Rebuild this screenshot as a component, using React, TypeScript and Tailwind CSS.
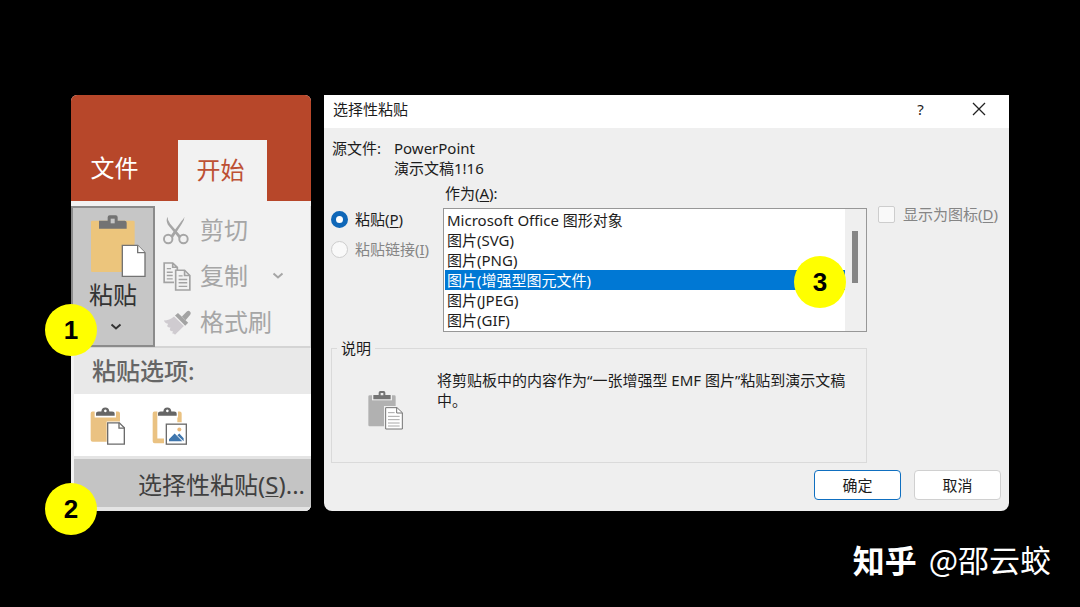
import type { ReactNode } from "react";

const formats = [
  "Microsoft Office 图形对象",
  "图片(SVG)",
  "图片(PNG)",
  "图片(增强型图元文件)",
  "图片(JPEG)",
  "图片(GIF)",
];

function Badge({ children, className }: { children: ReactNode; className: string }) {
  return (
    <span
      className={`absolute flex size-[52px] items-center justify-center rounded-full bg-[#ffff00] font-['Liberation_Sans',sans-serif] text-[26px] leading-none font-bold text-black ${className}`}
    >
      {children}
    </span>
  );
}

function PasteLargeIcon() {
  return (
    <svg viewBox="0 0 168 186" className="ml-2.5 h-[62px] w-14" aria-hidden="true">
      <rect x="3" y="17" width="131" height="154" rx="4" fill="#ecc57c" />
      <path d="M27 17h26V7q0-6 6-6h18q6 0 6 6v10h21q6 0 6 6v18H27z" fill="#737373" />
      <rect x="62" y="11" width="12" height="14" fill="#c6c6c6" />
      <path d="M91 171h77v15H91z" fill="#c6c6c6" />
      <path d="M134 85h34v86h-34z" fill="#c6c6c6" />
      <path d="M97 91h46l22 22v71H97z" fill="#fff" stroke="#737373" strokeWidth="4" />
      <path d="M143 91v22h22" fill="#fff" stroke="#737373" strokeWidth="4" />
    </svg>
  );
}

function ScissorsIcon() {
  return (
    <svg viewBox="0 0 80 88" className="h-[29px] w-[26px]" fill="none" stroke="#a6a6a6" aria-hidden="true">
      <path d="M14 2q0 12 8 21l35 40-8 5L15 26Q8 14 14 2z" fill="#a6a6a6" stroke="none" />
      <path d="M66 2q0 12-8 21L30 67l-8-5 35-47q7-7 9-13z" fill="#a6a6a6" stroke="none" />
      <circle cx="16" cy="70" r="13" strokeWidth="6" />
      <circle cx="63" cy="70" r="13" strokeWidth="6" />
    </svg>
  );
}

function CopyIcon() {
  return (
    <svg viewBox="0 0 84 88" className="h-[29px] w-7" fill="none" stroke="#a3a3a3" strokeWidth="5" aria-hidden="true">
      <path d="M33 62H3V3h26l14 13v8M29 3v13h14" />
      <path d="M11 20h13M11 31h18M11 41h18M11 51h18" strokeWidth="4" />
      <path d="M38 25h27l16 16v44H38z" fill="#f2f2f2" />
      <path d="M65 25v16h16" />
      <path d="M47 42h12M47 53h26M47 63h26M47 74h26" strokeWidth="4" />
    </svg>
  );
}

function BrushIcon() {
  return (
    <svg viewBox="0 0 84 76" className="h-[25px] w-7" aria-hidden="true">
      <path d="M2 32q17 0 31-12l30 29-27 26q-5-5-8-3l1-8q-7 2-9-4l2-7q-8 2-10-4l3-7q-8 0-13-10z" fill="#cfcbd0" />
      <path d="M36 17l9-8 31 30-9 9z" fill="#a3a3a3" />
      <path d="M57 20L71 5q8-6 12 2 2 5-2 9L68 31z" fill="#a3a3a3" />
    </svg>
  );
}

function Chevron({ className }: { className: string }) {
  return (
    <svg viewBox="0 0 12 8" className={`h-2 w-3 ${className}`} fill="none" stroke="currentColor" strokeWidth="2" aria-hidden="true">
      <path d="M1.500 1.500L6 5.500l4.500-4" />
    </svg>
  );
}

function ClipHead() {
  return (
    <path
      d="M18 29v-6q0-7 8-7h8q1-12 12-12t12 12h8q8 0 8 7v6z M46 10a4 4 0 1 0 .1 0z"
      fill="#666"
      fillRule="evenodd"
    />
  );
}

function KeepSourceIcon() {
  return (
    <svg viewBox="0 0 108 116" className="h-[39px] w-9" aria-hidden="true">
      <path d="M7 16h7v18h64V16h6q6 0 6 6v24H50v61H8q-6 0-6-6V22q0-6 5-6z" fill="#eac282" />
      <ClipHead />
      <path d="M53 50h35l15 15v49H53z" fill="#fff" stroke="#6b6b6b" strokeWidth="4" />
      <path d="M87 50v16h16" fill="none" stroke="#6b6b6b" strokeWidth="4" />
    </svg>
  );
}

function PastePictureIcon() {
  return (
    <svg viewBox="0 0 108 116" className="h-[39px] w-9" aria-hidden="true">
      <path d="M7 16h9v81h20v14H8q-6 0-6-6V22q0-6 5-6zM78 16h5q6 0 6 6v26H76V34h2z" fill="#eac282" />
      <ClipHead />
      <rect x="43" y="54" width="60" height="60" fill="#fff" stroke="#6b6b6b" strokeWidth="4" />
      <circle cx="82" cy="70" r="6" fill="#eab97c" />
      <path d="M51 105V99l17-17 23 23zM76 87l6-5 13 14v9z" fill="#3f76ad" />
    </svg>
  );
}

function PasteGrayIcon() {
  return (
    <svg viewBox="0 0 105 118" className="h-10 w-[35px]" aria-hidden="true">
      <path d="M5 15h74q4 0 4 4v89H5q-4 0-4-4V19q0-4 4-4z" fill="#b1b1b1" />
      <path d="M12 12h60v18H12z" fill="#efefef" />
      <path d="M16 27V14h16V7q0-5 5-5h10q5 0 5 5v7h16v13z M38 8v7h8V8z" fill="#747474" fillRule="evenodd" />
      <path d="M48 47h57v71H48z" fill="#efefef" />
      <path d="M53 52h34l16 15v49H53z" fill="#fff" stroke="#747474" strokeWidth="3" />
      <path d="M86 52v16h17" fill="none" stroke="#747474" strokeWidth="3" />
      <path d="M60 67h20M60 78h35M60 88h35M60 98h35M60 107h35" stroke="#a8a8a8" strokeWidth="3" />
    </svg>
  );
}

function RibbonPanel() {
  return (
    <section className="relative w-60 shrink-0" aria-label="开始">
      <div className="overflow-hidden rounded-md bg-[#f2f2f2] text-2xl leading-8">
        <nav className="flex items-end bg-[#b7472a] pt-[45px]">
          <button className="h-[61px] w-[107px] pr-5 pb-1.5 text-white">文件</button>
          <button className="h-[61px] w-[89px] bg-[#f2f2f2] pr-1 pb-0.5 text-[#bd5034]">开始</button>
        </nav>

        <div className="flex h-[147px] border-b-2 border-[#d4d4d4] pt-[5px]">
          <button className="flex h-[141px] w-[84px] flex-col items-center border-2 border-[#8b8b8b] bg-[#c6c6c6] pt-[7px] text-[#333]">
            <PasteLargeIcon />
            <span className="mt-0.5">粘贴</span>
            <Chevron className="mt-3 ml-1.5" />
          </button>
          <div className="flex flex-1 flex-col gap-[14px] border-r border-[#d8d8d8] pt-2 pl-2 text-[#a6a6a6]">
            <button className="flex items-center">
              <span className="w-[37px]"><ScissorsIcon /></span>剪切
            </button>
            <button className="flex items-center">
              <span className="w-[37px]"><CopyIcon /></span>复制
              <Chevron className="ml-6" />
            </button>
            <button className="flex items-center">
              <span className="w-[37px]"><BrushIcon /></span>格式刷
            </button>
          </div>
        </div>

        <div className="border-l-[3px] border-[#f2f2f2] bg-white">
          <h2 className="bg-[#e9e9e9] py-[7px] pl-[18px] font-medium text-[#666]">粘贴选项:</h2>
          <div className="flex h-[62px] gap-[26px] pt-3 pl-4">
            <button aria-label="使用目标主题" className="flex items-start"><KeepSourceIcon /></button>
            <button aria-label="图片" className="flex items-start"><PastePictureIcon /></button>
          </div>
          <div className="border-t-[3px] border-b-4 border-[#e4e4e4]">
            <button className="block h-12 w-full bg-[#c4c4c4] pt-1 pr-1.5 text-right whitespace-nowrap text-[#404040]">
              选择性粘贴(<u className="decoration-1 underline-offset-2">S</u>)...
            </button>
          </div>
        </div>
      </div>
      <Badge className="top-[209px] -left-[26px]">1</Badge>
      <Badge className="top-[388px] -left-[26px]">2</Badge>
    </section>
  );
}

function PasteSpecialDialog() {
  return (
    <section
      role="dialog"
      aria-labelledby="dialog-title"
      className="min-w-0 flex-1 rounded-b-lg bg-[#efefef] text-[15px] leading-5 text-[#1c1c1c]"
    >
      <header className="flex h-[33px] items-center bg-white pb-1.5 pl-[9px]">
        <h1 id="dialog-title" className="flex-1">选择性粘贴</h1>
        <button aria-label="帮助" className="w-[57px]">?</button>
        <button aria-label="关闭" className="flex w-[60px] justify-center">
          <svg viewBox="0 0 14 14" className="size-3.5" stroke="#222" strokeWidth="1.300" aria-hidden="true">
            <path d="M1 1l12 12M13 1L1 13" />
          </svg>
        </button>
      </header>

      <form className="pt-2.5 pr-2 pb-[11px] pl-[7px]" onSubmit={(e) => e.preventDefault()}>
        <dl className="flex pl-px">
          <dt className="w-[62px]">源文件:</dt>
          <dd>PowerPoint<br />演示文稿1!16</dd>
        </dl>

        <div className="grid grid-cols-[112px_1fr_134px] pt-[5px]">
          <p id="formats-label" className="col-start-2 pb-[5px] pl-0.5">
            作为(<u className="underline-offset-2">A</u>):
          </p>
          <div className="col-start-1 flex flex-col gap-2.5 pt-px">
            <label className="flex items-center gap-[7px] whitespace-nowrap">
              <input
                type="radio"
                name="mode"
                defaultChecked
                className="size-[17px] appearance-none rounded-full border-[5px] border-[#0f67b8] bg-white"
              />
              <span>粘贴(<u className="underline-offset-2">P</u>)</span>
            </label>
            <label className="flex items-center gap-[7px] whitespace-nowrap text-[#858585]">
              <input
                type="radio"
                name="mode"
                disabled
                className="size-[17px] appearance-none rounded-full border border-[#cdcdcd] bg-[#f9f9f9]"
              />
              <span>粘贴链接(<u className="underline-offset-2">I</u>)</span>
            </label>
          </div>

          <div className="relative flex border border-[#979797] bg-white">
            <ul role="listbox" aria-labelledby="formats-label" className="flex-1 py-px pl-px">
              {formats.map((f, i) => (
                <li
                  key={f}
                  role="option"
                  aria-selected={i === 3}
                  className={i === 3 ? "bg-[#0078d4] pl-0.5 text-white" : "pl-0.5"}
                >
                  {f}
                </li>
              ))}
            </ul>
            <div className="w-[21px] bg-[#efefef] pt-[22px] pl-[7px]">
              <div className="h-[52px] w-1.5 bg-[#868686]" />
            </div>
            <Badge className="top-[47px] right-[20px]">3</Badge>
          </div>

          <label className="-mt-1 flex items-center gap-2 self-start pl-[11px] whitespace-nowrap text-[#858585]">
            <input
              type="checkbox"
              disabled
              className="size-[17px] appearance-none rounded-[2px] border border-[#cdcdcd] bg-[#f9f9f9]"
            />
            <span>显示为图标(<u className="underline-offset-2">D</u>)</span>
          </label>

          <fieldset className="col-span-2 mt-1.5 border border-[#dadada]">
            <legend className="ml-[5px] px-1">说明</legend>
            <div className="flex min-h-[104px] items-start gap-[34px] pl-9">
              <div className="shrink-0 pt-8"><PasteGrayIcon /></div>
              <p className="pt-3 pr-3">将剪贴板中的内容作为“一张增强型 EMF 图片”粘贴到演示文稿中。</p>
            </div>
          </fieldset>
        </div>

        <div className="mt-[7px] flex justify-end gap-[13px]">
          <button type="submit" className="h-[30px] w-[87px] rounded border border-[#0f6fc0] bg-white">确定</button>
          <button type="button" className="h-[30px] w-[87px] rounded border border-[#d0d0d0] bg-white">取消</button>
        </div>
      </form>
    </section>
  );
}

export default function App() {
  return (
    <main className="flex min-h-screen flex-col bg-black font-['Noto_Sans','Noto_Sans_CJK_SC',sans-serif]">
      <div className="flex items-start gap-[13px] px-[71px] pt-[95px]">
        <RibbonPanel />
        <PasteSpecialDialog />
      </div>
      <footer className="flex items-center justify-end gap-3 pt-[26px] pr-[29px] font-['Noto_Sans_CJK_SC',sans-serif] text-[32px] leading-[44px] text-white">
        <strong className="font-bold">知乎</strong>
        <span className="text-[31px]">@邵云蛟</span>
      </footer>
    </main>
  );
}
